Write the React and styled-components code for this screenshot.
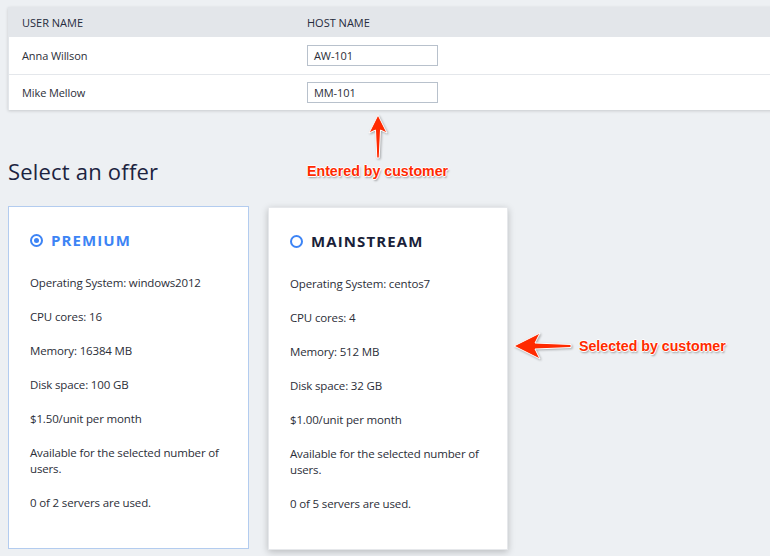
import React from "react";
import styled, { createGlobalStyle } from "styled-components";

const Global = createGlobalStyle`
  html, body { margin: 0; padding: 0; background: #edf0f3; }
  body { font-family: "Open Sans", "Liberation Sans", sans-serif; color: #2b2e38; }
  * { box-sizing: border-box; }
`;

const Page = styled.div`
  position: relative;
  width: 770px;
  height: 556px;
  overflow: hidden;
  padding: 7px 0 0 8px;
`;

const Table = styled.div`
  background: #fff;
  box-shadow: 0 1px 3px rgba(0, 0, 0, 0.16);
  border-left: 1px solid #e2e6ea;
  width: 770px;
`;

const Row = styled.div`
  display: grid;
  grid-template-columns: 298px 1fr;
  align-items: center;
  height: ${(p) => (p.$head ? "30px" : "36.5px")};
  padding-left: 13px;
  background: ${(p) => (p.$head ? "#e3e6ea" : "#fff")};
  border-top: ${(p) => (p.$head || p.$first ? "none" : "1px solid #e4e7eb")};
  font-size: 11px;
  letter-spacing: ${(p) => (p.$head ? "0" : "-0.1px")};
  text-transform: ${(p) => (p.$head ? "uppercase" : "none")};
  color: ${(p) => (p.$head ? "#262b3d" : "#2b2e38")};
`;

const HostInput = styled.div`
  margin-left: -13px;
  width: 131px;
  height: 21px;
  border: 1px solid #b8c1cc;
  display: flex;
  align-items: center;
  padding-left: 6px;
  font-size: 11px;
  color: #2b2e38;
`;

const Heading = styled.h2`
  margin: 48px 0 22px 0;
  font-size: 22px;
  line-height: 26px;
  font-weight: 500;
  color: #1c2340;
  letter-spacing: 0.2px;
`;

const Cards = styled.div`
  display: flex;
  gap: 19px;
  align-items: flex-start;
`;

const Card = styled.div`
  width: ${(p) => (p.$selected ? "241px" : "240px")};
  height: 343px;
  margin-top: ${(p) => (p.$selected ? "0" : "1px")};
  background: #fff;
  border: 1px solid ${(p) => (p.$selected ? "#b3ccef" : "#e6e8eb")};
  box-shadow: ${(p) => (p.$selected ? "none" : "0 2px 7px rgba(0,0,0,0.22)")};
  padding: 23px 20px 0 21px;
`;

const Title = styled.div`
  display: flex;
  align-items: center;
  gap: 8px;
  height: 20px;
  font-size: 15px;
  font-weight: 700;
  letter-spacing: 1.1px;
  color: ${(p) => (p.$selected ? "#3d84f5" : "#1a1f3a")};
  margin-bottom: 25px;
`;

const Radio = styled.span`
  width: 13px;
  height: 13px;
  border-radius: 50%;
  border: 2px solid #3d84f5;
  display: flex;
  align-items: center;
  justify-content: center;
  &::after {
    content: "";
    width: 5px;
    height: 5px;
    border-radius: 50%;
    background: ${(p) => (p.$selected ? "#3d84f5" : "transparent")};
  }
`;

const Line = styled.p`
  margin: 0 0 18px 0;
  font-size: 11.5px;
  letter-spacing: -0.15px;
  line-height: 16px;
  color: #2b2e38;
`;

const Note = styled.div`
  position: absolute;
  left: ${(p) => p.$x}px;
  top: ${(p) => p.$y}px;
  font-family: "Liberation Sans", Arial, sans-serif;
  font-weight: 700;
  font-size: 14.2px;
  line-height: 16px;
  color: #ff2a00;
  white-space: nowrap;
  text-shadow: -1px 0 #fff, 1px 0 #fff, 0 -1px #fff, 0 1px #fff,
    1px 2px 2px rgba(0, 0, 0, 0.35);
`;

const Arrow = styled.svg`
  position: absolute;
  left: ${(p) => p.$x}px;
  top: ${(p) => p.$y}px;
  overflow: visible;
  filter: drop-shadow(1px 1px 1px rgba(0, 0, 0, 0.3));
`;

const offers = [
  {
    name: "PREMIUM",
    selected: true,
    lines: [
      "Operating System: windows2012",
      "CPU cores: 16",
      "Memory: 16384 MB",
      "Disk space: 100 GB",
      "$1.50/unit per month",
      "Available for the selected number of users.",
      "0 of 2 servers are used.",
    ],
  },
  {
    name: "MAINSTREAM",
    selected: false,
    lines: [
      "Operating System: centos7",
      "CPU cores: 4",
      "Memory: 512 MB",
      "Disk space: 32 GB",
      "$1.00/unit per month",
      "Available for the selected number of users.",
      "0 of 5 servers are used.",
    ],
  },
];

export default function App() {
  return (
    <>
      <Global />
      <Page>
        <Table>
          <Row $head>
            <span>User Name</span>
            <span style={{ marginLeft: -13 }}>Host Name</span>
          </Row>
          <Row $first>
            <span>Anna Willson</span>
            <HostInput>AW-101</HostInput>
          </Row>
          <Row>
            <span>Mike Mellow</span>
            <HostInput>MM-101</HostInput>
          </Row>
        </Table>
        <Heading>Select an offer</Heading>
        <Cards>
          {offers.map((o) => (
            <Card key={o.name} $selected={o.selected}>
              <Title $selected={o.selected}>
                <Radio $selected={o.selected} />
                {o.name}
              </Title>
              {o.lines.map((l) => (
                <Line key={l}>{l}</Line>
              ))}
            </Card>
          ))}
        </Cards>

        <Arrow $x={368} $y={115} width="20" height="45" viewBox="0 0 20 45">
          <path
            d="M10 0 L19 18 L12.5 15 L11.2 43 L8.8 43 L7.5 15 L1 18 Z"
            fill="#ff2a00"
            stroke="#fff"
            strokeWidth="1"
          />
        </Arrow>
        <Note $x={307} $y={163}>Entered by customer</Note>

        <Arrow $x={514} $y={333} width="58" height="26" viewBox="0 0 58 26">
          <path
            d="M0 13 L26 0 L21 10 L57 11.5 L57 14.5 L21 16 L26 26 Z"
            fill="#ff2a00"
            stroke="#fff"
            strokeWidth="1"
          />
        </Arrow>
        <Note $x={579} $y={338}>Selected by customer</Note>
      </Page>
    </>
  );
}
